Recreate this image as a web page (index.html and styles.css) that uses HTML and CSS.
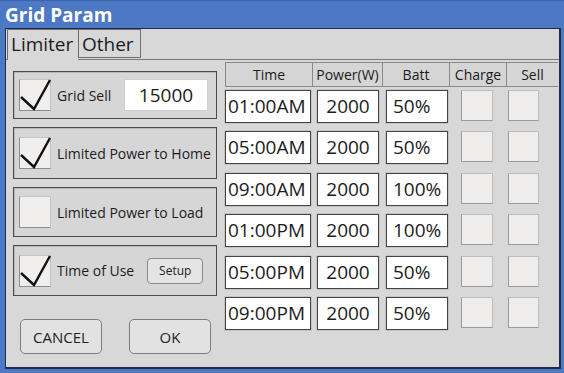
FILE: index.html
```html
<!DOCTYPE html>
<html lang="en">
<head>
  <meta charset="UTF-8">
  <meta name="viewport" content="width=device-width, initial-scale=1.0">
  <title>Grid Param</title>
  <link rel="stylesheet" href="styles.css">
</head>
<body>
  <div class="window">
    <div class="titlebar">Grid Param</div>
    <div class="panel">
      <div class="tabs">
        <div class="tab active">Limiter</div>
        <div class="tab">Other</div>
      </div>
      <div class="content">
        <div class="options">
          <div class="group g1">
            <span class="check on"><svg viewBox="0 0 32 32"><path d="M2 18 L15 30 L31 1"/></svg></span>
            <span class="label">Grid Sell</span>
            <span class="field">15000</span>
          </div>
          <div class="group g2">
            <span class="check on"><svg viewBox="0 0 32 32"><path d="M2 18 L15 30 L31 1"/></svg></span>
            <span class="label">Limited Power to Home</span>
          </div>
          <div class="group g3">
            <span class="check"></span>
            <span class="label">Limited Power to Load</span>
          </div>
          <div class="group g4">
            <span class="check on"><svg viewBox="0 0 32 32"><path d="M2 18 L15 30 L31 1"/></svg></span>
            <span class="label">Time of Use</span>
            <button class="setup">Setup</button>
          </div>
          <div class="actions">
            <button class="btn">CANCEL</button>
            <button class="btn">OK</button>
          </div>
        </div>
        <div class="schedule">
          <div class="head">
            <div class="hcell">Time</div>
            <div class="hcell">Power(W)</div>
            <div class="hcell">Batt</div>
            <div class="hcell">Charge</div>
            <div class="hcell">Sell</div>
          </div>
          <div class="rows">
            <div class="row">
              <span class="time">01:00AM</span><span class="power">2000</span><span class="batt">50%</span><span class="box charge"></span><span class="box sell"></span>
            </div>
            <div class="row">
              <span class="time">05:00AM</span><span class="power">2000</span><span class="batt">50%</span><span class="box charge"></span><span class="box sell"></span>
            </div>
            <div class="row">
              <span class="time">09:00AM</span><span class="power">2000</span><span class="batt">100%</span><span class="box charge"></span><span class="box sell"></span>
            </div>
            <div class="row">
              <span class="time">01:00PM</span><span class="power">2000</span><span class="batt">100%</span><span class="box charge"></span><span class="box sell"></span>
            </div>
            <div class="row">
              <span class="time">05:00PM</span><span class="power">2000</span><span class="batt">50%</span><span class="box charge"></span><span class="box sell"></span>
            </div>
            <div class="row">
              <span class="time">09:00PM</span><span class="power">2000</span><span class="batt">50%</span><span class="box charge"></span><span class="box sell"></span>
            </div>
          </div>
        </div>
      </div>
    </div>
  </div>
</body>
</html>
```
FILE: styles.css
```css
body {
  margin: 0;
  font-family: 'Open Sans', sans-serif;
  color: #1c1c1c;
  background: #4d78c4;
}

.window {
  width: 564px;
  height: 373px;
  background: #4d78c4;
  display: flex;
  flex-direction: column;
}

.titlebar {
  height: 28px;
  padding-left: 5px;
  color: #fff;
  font-size: 19px;
  font-weight: bold;
  line-height: 28px;
  border-top: 1px solid #3c63ab;
  box-sizing: border-box;
}

.panel {
  margin: 0 3px 4px 5px;
  height: 341px;
  background: #d8d8d8;
  border: 1px solid #1f2b48;
  border-width: 1px 2px 2px 1px;
  box-sizing: border-box;
}

/* tabs */
.tabs {
  display: flex;
  height: 30px;
  border-bottom: 1px solid #7a7a7a;
}

.tab {
  height: 29px;
  padding: 0 3px;
  font-size: 19px;
  line-height: 29px;
  border: 1px solid #6f6f6f;
  border-right: none;
  box-sizing: border-box;
}

.tab.active {
  width: 71px;
  height: 31px;
  margin-left: 1px;
  background: #d8d8d8;
  border-bottom: none;
}

.tab:last-child {
  width: 63px;
  border-right: 1px solid #6f6f6f;
}

/* content */
.content {
  display: flex;
  gap: 8px;
  padding: 2px 1px 0 7px;
}

.options {
  width: 204px;
  margin-top: 9px;
  display: flex;
  flex-direction: column;
  gap: 8px;
}

.group {
  display: flex;
  align-items: center;
  padding: 0 8px 0 5px;
  border: 1px solid #4b4b4b;
  box-shadow: inset 1px 1px 0 #b8b8b8;
  background: #d6d6d6;
  box-sizing: border-box;
}

.g1 { height: 48px; }
.g2 { height: 52px; }
.g3 { height: 50px; }
.g4 { height: 51px; }

.check {
  width: 32px;
  height: 32px;
  flex: none;
  background: #f1efee;
  border: 1px solid #c4c4c4;
  border-left-color: #8d8d8d;
  border-bottom-color: #8d8d8d;
  box-sizing: border-box;
  position: relative;
}

.check svg {
  position: absolute;
  left: -1px;
  top: -1px;
  width: 32px;
  height: 32px;
  overflow: visible;
}

.check path {
  fill: none;
  stroke: #111;
  stroke-width: 2.4;
}

.label {
  margin-left: 6px;
  font-size: 14px;
  white-space: nowrap;
}

.field {
  margin-left: auto;
  width: 84px;
  height: 32px;
  background: #fff;
  border: 1px solid #d0d0d0;
  box-sizing: border-box;
  font-size: 19px;
  line-height: 30px;
  text-align: center;
}

.setup {
  margin-left: 13px;
  width: 56px;
  height: 26px;
  padding: 0;
  font-family: 'Open Sans', sans-serif;
  font-size: 12px;
  color: #222;
  background: #e4e4e4;
  border: 1px solid #8a8a8a;
  border-radius: 4px;
}

.actions {
  display: flex;
  gap: 27px;
  padding-left: 7px;
  margin-top: 15px;
}

.btn {
  width: 82px;
  height: 35px;
  padding: 0;
  font-family: 'Open Sans', sans-serif;
  font-size: 15px;
  color: #222;
  background: #e2e2e2;
  border: 1px solid #7d7d7d;
  border-radius: 5px;
}

/* schedule table */
.schedule {
  width: 333px;
}

.head {
  display: grid;
  grid-template-columns: 87px 70px 67px 57px 52px;
  height: 25px;
  border-top: 1px solid #8a8a8a;
  border-bottom: 1px solid #8a8a8a;
  box-sizing: border-box;
}

.hcell {
  font-size: 14px;
  line-height: 23px;
  text-align: center;
  border-left: 1px solid #8a8a8a;
  background: #d5d5d5;
  white-space: nowrap;
}

.rows {
  margin-top: 3px;
  display: flex;
  flex-direction: column;
  gap: 8.4px;
}

.row {
  display: grid;
  grid-template-columns: 87px 70px 67px 57px 52px;
  height: 33px;
}

.time, .power, .batt {
  background: #fff;
  border: 1px solid #444;
  box-shadow: 0 0 1px #666;
  box-sizing: border-box;
  font-size: 19px;
  line-height: 31px;
}

.time {
  width: 86px;
  padding-left: 2px;
}

.power {
  width: 62px;
  margin-left: 5px;
  text-align: center;
}

.batt {
  width: 62px;
  margin-left: 4px;
  padding-left: 6px;
}

.box {
  height: 31px;
  background: #efedec;
  border: 1px solid #bdbdbd;
  border-left-color: #9a9a9a;
  border-bottom-color: #9a9a9a;
  box-sizing: border-box;
}

.charge {
  width: 32px;
  margin-left: 12px;
}

.sell {
  width: 31px;
  margin-left: 2px;
}
```
